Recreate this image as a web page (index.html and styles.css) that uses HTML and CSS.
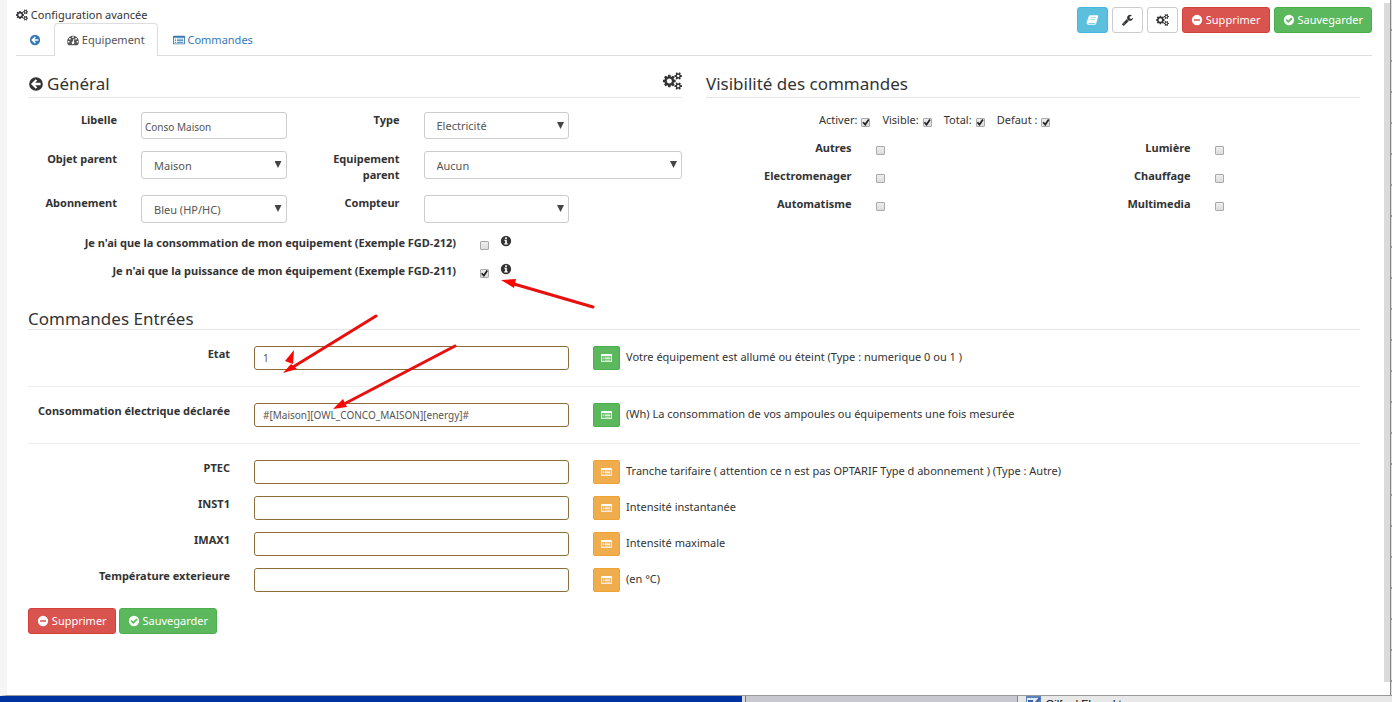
FILE: index.html
```html
<!DOCTYPE html>
<html lang="fr">
<head>
<meta charset="utf-8">
<title>Configuration avancée</title>
<link rel="stylesheet" href="styles.css">
</head>
<body>
<svg class="sprite" aria-hidden="true">
  <symbol id="cogs" viewBox="0 0 1920 1792"><path d="M896 896q0-106-75-181t-181-75-181 75-75 181 75 181 181 75 181-75 75-181zm768 512q0-52-38-90t-90-38-90 38-38 90q0 53 37.500 90.500t90.500 37.500 90.500-37.500 37.500-90.500zm0-1024q0-52-38-90t-90-38-90 38-38 90q0 53 37.500 90.500t90.500 37.500 90.500-37.500 37.500-90.500zm-384 421v185q0 10-7 19.500t-16 10.500l-155 24q-11 35-32 76 34 48 90 115 7 11 7 20 0 12-7 19-23 30-82.500 89.500t-78.500 59.500q-11 0-21-7l-115-90q-37 19-77 31-11 108-23 155-7 24-30 24h-186q-11 0-20-7.500t-10-17.500l-23-153q-34-10-75-31l-118 89q-7 7-20 7-11 0-21-8-144-133-144-160 0-9 7-19 10-14 41-53t47-61q-23-44-35-82l-152-24q-10-1-17-9.500t-7-19.500v-185q0-10 7-19.500t16-10.500l155-24q11-35 32-76-34-48-90-115-7-11-7-20 0-12 7-20 22-30 82-89t79-59q11 0 21 7l115 90q34-18 77-32 11-108 23-154 7-24 30-24h186q11 0 20 7.500t10 17.500l23 153q34 10 75 31l118-89q8-7 20-7 11 0 21 8 144 133 144 160 0 8-7 19-12 16-42 54t-45 60q23 48 34 82l152 23q10 2 17 10.500t7 19.500zm640 533v140q0 16-149 31-12 27-30 52 51 113 51 138 0 4-4 7-122 71-124 71-8 0-46-47t-52-68q-20 2-30 2t-30-2q-14 21-52 68t-46 47q-2 0-124-71-4-3-4-7 0-25 51-138-18-25-30-52-149-15-149-31v-140q0-16 149-31 13-29 30-52-51-113-51-138 0-4 4-7 4-2 35-20t59-34 30-16q8 0 46 46.500t52 67.500q20-2 30-2t30 2q51-71 92-112l6-2q4 0 124 70 4 3 4 7 0 25-51 138 17 23 30 52 149 15 149 31zm0-1024v140q0 16-149 31-12 27-30 52 51 113 51 138 0 4-4 7-122 71-124 71-8 0-46-47t-52-68q-20 2-30 2t-30-2q-14 21-52 68t-46 47q-2 0-124-71-4-3-4-7 0-25 51-138-18-25-30-52-149-15-149-31v-140q0-16 149-31 13-29 30-52-51-113-51-138 0-4 4-7 4-2 35-20t59-34 30-16q8 0 46 46.500t52 67.500q20-2 30-2t30 2q51-71 92-112l6-2q4 0 124 70 4 3 4 7 0 25-51 138 17 23 30 52 149 15 149 31z"/></symbol>
  <symbol id="wrench" viewBox="0 0 1792 1792"><path d="M448 1472q0-26-19-45t-45-19-45 19-19 45 19 45 45 19 45-19 19-45zm644-420l-682 682q-37 37-90 37-52 0-91-37l-106-108q-38-36-38-90 0-53 38-91l681-681q39 98 114.500 173.500t173.500 114.500zm634-435q0 39-23 106-47 134-164.500 217.500t-258.500 83.500q-185 0-316.500-131.500t-131.500-316.500 131.500-316.500 316.500-131.500q58 0 121.500 16.500t107.500 46.500q16 11 16 28t-16 28l-293 169v224l193 107q5-3 79-48.500t135.500-81 70.500-35.500q15 0 23.500 10t8.500 25z"/></symbol>
  <symbol id="minus" viewBox="0 0 14 14"><path fill-rule="evenodd" d="M7 1a6 6 0 1 1 0 12a6 6 0 0 1 0-12zM3.500 6v2h7v-2z"/></symbol>
  <symbol id="check" viewBox="0 0 14 14"><path fill-rule="evenodd" d="M7 1a6 6 0 1 1 0 12a6 6 0 0 1 0-12zM2.900 7l3.300 3.400l5-5l-1.400-1.400l-3.600 3.600l-1.900-1.900z"/></symbol>
  <symbol id="back" viewBox="0 0 14 14"><path fill-rule="evenodd" d="M7 1a6 6 0 1 1 0 12a6 6 0 0 1 0-12zM2.600 7l4.200 4.200l1.300-1.300l-1.900-1.900h4.800v-2h-4.800l1.900-1.900l-1.300-1.300z"/></symbol>
  <symbol id="info" viewBox="0 0 14 14"><path fill-rule="evenodd" d="M7 1a6 6 0 1 1 0 12a6 6 0 0 1 0-12zM6 2.600v2h2v-2zM5 5.600v1.200h1v2.700h-1v1.500h4v-1.500h-1v-3.900z"/></symbol>
  <symbol id="list" viewBox="0 0 14 12"><path fill-rule="evenodd" d="M1 1h12q1 0 1 1v8q0 1-1 1h-12q-1 0-1-1v-8q0-1 1-1zM1 3.500v6.500h12v-6.500zM2 4.500h1.500v1h-1.500zM4.500 4.500h7.500v1h-7.500zM2 6.300h1.500v1h-1.500zM4.500 6.300h7.500v1h-7.500zM2 8.100h1.500v1h-1.500zM4.500 8.100h7.500v1h-7.500z"/></symbol>
  <symbol id="gauge" viewBox="0 0 14 12"><path fill-rule="evenodd" d="M7 1a7 7 0 0 1 5.900 10.500q-.2.500-.8.500h-10.200q-.5 0-.8-.5a7 7 0 0 1 5.900-10.500zM1 7.200v1.600h1.800v-1.600zM2.500 3.700v1.700h1.800v-1.700zM6.100 2v1.800h1.800v-1.800zM9.700 3.700v1.700h1.800v-1.700zM11.200 7.200v1.600h1.800v-1.600zM7.600 4.500l-.9 3.300a1.500 1.500 0 1 0 1.300.3l.7-3.200z"/></symbol>
  <symbol id="book" viewBox="0 0 14 14"><path fill-rule="evenodd" d="M4.500 1.500h8.500q1 .4.700 1.500l-2.500 8.500q-.3 1-1.300 1h-7.700q-1.700-.2-2-1.800v-1l2.500-7q.6-1.200 1.800-1.200zM5.300 4l-.2.800h5.500l.3-.8zM4.700 6l-.2.800h5.500l.3-.8zM2 10.400q0 .9 1 1h6.700l.3-1z"/></symbol>
  <symbol id="notepad" viewBox="0 0 16 12"><path fill="#5d82bd" d="M1 0h15v12h-15z"/><path fill="#dfeafa" d="M2 2h11v10h-11z"/><path stroke="#3d62a8" stroke-width="2" d="M15 2l-8 9M3 5h5M3 8h3"/></symbol>
</svg>

<div class="screen">
  <main class="page">
    <header class="top">
      <div class="title"><svg class="icon"><use href="#cogs"/></svg> Configuration avancée</div>
      <div class="actions">
        <button class="btn info" type="button" aria-label="Documentation"><svg class="icon wide"><use href="#book"/></svg></button>
        <button class="btn plain" type="button" aria-label="Outils"><svg class="icon wide"><use href="#wrench"/></svg></button>
        <button class="btn plain" type="button" aria-label="Configuration"><svg class="icon wide"><use href="#cogs"/></svg></button>
        <button class="btn danger" type="button"><svg class="icon"><use href="#minus"/></svg> Supprimer</button>
        <button class="btn success" type="button"><svg class="icon"><use href="#check"/></svg> Sauvegarder</button>
      </div>
    </header>
    <nav class="tabs">
      <a class="tab" href="#retour" aria-label="Retour"><svg class="icon"><use href="#back"/></svg></a>
      <a class="tab active" href="#equipement"><svg class="icon"><use href="#gauge"/></svg> Equipement</a>
      <a class="tab" href="#commandes"><svg class="icon"><use href="#list"/></svg> Commandes</a>
    </nav>

    <form class="panel">
      <div class="columns">
        <section>
          <h3 class="heading"><svg class="icon large"><use href="#back"/></svg> Général <svg class="icon gear"><use href="#cogs"/></svg></h3>
          <div class="row fields first">
            <label class="label c2" for="libelle">Libelle</label>
            <input class="field name c3" id="libelle" type="text" value="Conso Maison">
            <label class="label c2" for="type">Type</label>
            <div class="select c3"><select class="field" id="type"><option>Electricité</option></select></div>
          </div>
          <div class="row fields">
            <label class="label c2" for="objet">Objet parent</label>
            <div class="select c3"><select class="field" id="objet"><option>Maison</option></select></div>
            <label class="label c2" for="parent">Equipement parent</label>
            <div class="select c5"><select class="field" id="parent"><option>Aucun</option></select></div>
          </div>
          <div class="row fields">
            <label class="label c2" for="abo">Abonnement</label>
            <div class="select c3"><select class="field" id="abo"><option>Bleu (HP/HC)</option></select></div>
            <label class="label c2" for="compteur">Compteur</label>
            <div class="select c3"><select class="field" id="compteur"><option></option></select></div>
          </div>
          <div class="row tick">
            <label class="label c8" for="conso">Je n'ai que la consommation de mon equipement (Exemple FGD-212)</label>
            <div class="c4 hint"><input class="box" id="conso" type="checkbox"><svg class="icon"><use href="#info"/></svg></div>
          </div>
          <div class="row tick">
            <label class="label c8" for="puissance">Je n'ai que la puissance de mon équipement (Exemple FGD-211)</label>
            <div class="c4 hint"><input class="box" id="puissance" type="checkbox" checked><svg class="icon"><use href="#info"/></svg></div>
          </div>
        </section>

        <section>
          <h3 class="heading">Visibilité des commandes</h3>
          <div class="row">
            <div class="flags">
              <label class="flag">Activer: <input class="box" type="checkbox" checked></label>
              <label class="flag">Visible: <input class="box" type="checkbox" checked></label>
              <label class="flag">Total: <input class="box" type="checkbox" checked></label>
              <label class="flag">Defaut : <input class="box" type="checkbox" checked></label>
            </div>
          </div>
          <div class="row tick">
            <label class="label c3" for="autres">Autres</label><div class="c3 hint"><input class="box" id="autres" type="checkbox"></div>
            <label class="label c3" for="lumiere">Lumière</label><div class="c3 hint"><input class="box" id="lumiere" type="checkbox"></div>
          </div>
          <div class="row tick">
            <label class="label c3" for="electro">Electromenager</label><div class="c3 hint"><input class="box" id="electro" type="checkbox"></div>
            <label class="label c3" for="chauffage">Chauffage</label><div class="c3 hint"><input class="box" id="chauffage" type="checkbox"></div>
          </div>
          <div class="row tick">
            <label class="label c3" for="auto">Automatisme</label><div class="c3 hint"><input class="box" id="auto" type="checkbox"></div>
            <label class="label c3" for="multi">Multimedia</label><div class="c3 hint"><input class="box" id="multi" type="checkbox"></div>
          </div>
        </section>
      </div>

      <section class="inputs">
        <h3 class="heading compact">Commandes Entrées</h3>
        <div class="row command">
          <label class="label c2" for="etat">Etat</label>
          <input class="field source c3" id="etat" type="text" value="1">
          <div class="c7 note"><button class="pick success" type="button" aria-label="Choisir"><svg class="icon"><use href="#list"/></svg></button>Votre équipement est allumé ou éteint (Type : numerique 0 ou 1 )</div>
        </div>
        <hr class="rule">
        <div class="row command">
          <label class="label c2" for="elec">Consommation électrique déclarée</label>
          <input class="field source c3" id="elec" type="text" value="#[Maison][OWL_CONCO_MAISON][energy]#">
          <div class="c7 note"><button class="pick success" type="button" aria-label="Choisir"><svg class="icon"><use href="#list"/></svg></button>(Wh) La consommation de vos ampoules ou équipements une fois mesurée</div>
        </div>
        <hr class="rule">
        <div class="row command">
          <label class="label c2" for="ptec">PTEC</label>
          <input class="field source c3" id="ptec" type="text">
          <div class="c7 note"><button class="pick warning" type="button" aria-label="Choisir"><svg class="icon"><use href="#list"/></svg></button>Tranche tarifaire ( attention ce n est pas OPTARIF Type d abonnement ) (Type : Autre)</div>
        </div>
        <div class="row command">
          <label class="label c2" for="inst">INST1</label>
          <input class="field source c3" id="inst" type="text">
          <div class="c7 note"><button class="pick warning" type="button" aria-label="Choisir"><svg class="icon"><use href="#list"/></svg></button>Intensité instantanée</div>
        </div>
        <div class="row command">
          <label class="label c2" for="imax">IMAX1</label>
          <input class="field source c3" id="imax" type="text">
          <div class="c7 note"><button class="pick warning" type="button" aria-label="Choisir"><svg class="icon"><use href="#list"/></svg></button>Intensité maximale</div>
        </div>
        <div class="row command">
          <label class="label c2" for="temp">Température exterieure</label>
          <input class="field source c3" id="temp" type="text">
          <div class="c7 note"><button class="pick warning" type="button" aria-label="Choisir"><svg class="icon"><use href="#list"/></svg></button>(en °C)</div>
        </div>
      </section>

      <div class="bottom">
        <button class="btn danger" type="button"><svg class="icon"><use href="#minus"/></svg> Supprimer</button>
        <button class="btn success" type="button"><svg class="icon"><use href="#check"/></svg> Sauvegarder</button>
      </div>
    </form>
  </main>
  <div class="scrollbar"></div>
  <div class="edge"></div>
</div>

<footer class="desktop">
  <div class="blue"></div>
  <div class="grey"></div>
  <div class="contact"><svg class="pad"><use href="#notepad"/></svg>Gilfred Elound t</div>
</footer>

<svg class="arrows" width="620" height="430" aria-hidden="true">
  <g stroke="#e8100c" stroke-width="3" stroke-linecap="round"><path d="M593 307L514 284M376 316L293 367M455 346L346 403"/></g>
  <g fill="#fb0500"><path d="M501 280l15-1l-2 9z"/><path d="M283 373l8-9l6 5zM285 361l9-11l-1 14z"/><path d="M333 409l10-10l4 8z"/></g>
</svg>
</body>
</html>
```

FILE: styles.css
```css
* { box-sizing: border-box; }
body {
  margin: 0;
  min-height: 100vh;
  display: flex;
  flex-direction: column;
  position: relative;
  overflow: hidden;
  background: #fff;
  color: #333;
  font: 11px/16px "Noto Sans", sans-serif;
}
.sprite { display: none; }
.screen { flex: 1; display: flex; border-left: 7px solid #f5f5f5; border-bottom: 1px solid #999; }
.page { flex: 1; padding: 7px 12px 0 9px; }
.scrollbar { width: 6px; margin: 3px 0 13px; background: #dbdbdb; }
.edge {
  width: 2px;
  border-left: 1px solid #888;
  background: repeating-linear-gradient(#ddd 0 29px, #999 29px 31px);
}
.icon { width: 12px; height: 12px; fill: currentColor; vertical-align: -2px; }
.icon.wide { width: 13px; }
.icon.large { width: 16px; height: 16px; }

.top { display: flex; justify-content: space-between; height: 16px; }
.actions { display: flex; gap: 4px; height: 26px; }
.btn {
  height: 26px;
  padding: 0 8px;
  border: 1px solid;
  border-radius: 3px;
  color: #fff;
  font: 11px/24px "Noto Sans", sans-serif;
  white-space: nowrap;
}
.info { background: #5bc0de; border-color: #46b8da; }
.plain { background: #fff; border-color: #ccc; color: #333; }
.danger { background: #d9534f; border-color: #d43f3a; }
.success { background: #5cb85c; border-color: #4cae4c; }
.warning { background: #f0ad4e; border-color: #eea236; }

.tabs { display: flex; border-bottom: 1px solid #ddd; }
.tab {
  padding: 8px 12px;
  border: 1px solid transparent;
  border-bottom: 0;
  border-radius: 4px 4px 0 0;
  margin-bottom: -1px;
  color: #337ab7;
  text-decoration: none;
}
.tab.active { border-color: #ddd; background: #fff; color: #555; margin-right: 2px; }

.panel { padding: 16px 12px 0; }
.columns { display: grid; grid-template-columns: 1fr 1fr; gap: 24px; }
.heading {
  display: flex;
  align-items: center;
  gap: 3px;
  height: 26px;
  margin: 0 0 14px;
  padding-bottom: 2px;
  border-bottom: 1px solid #e5e5e5;
  font-size: 17px;
  font-weight: 400;
}
.heading.compact { height: 22px; margin-bottom: 16px; padding-bottom: 0; }
.gear { width: 19px; height: 18px; margin: 0 0 6px auto; }
.row { display: grid; grid-template-columns: repeat(12, minmax(0, 1fr)); column-gap: 24px; }
.fields { margin-bottom: 12px; }
.c2 { grid-column: span 2; }
.c3 { grid-column: span 3; }
.c4 { grid-column: span 4; }
.c5 { grid-column: span 5; }
.c7 { grid-column: span 7; }
.c8 { grid-column: span 8; }
.label { font-weight: 700; text-align: right; justify-self: end; }
.c8.label, .command .label { white-space: nowrap; }
.field {
  width: 100%;
  height: 28px;
  border: 1px solid #ccc;
  border-radius: 3px;
  background: #fff;
  color: #555;
  font: 11px "Noto Sans", sans-serif;
}
.first .field { height: 27px; }
.name { padding: 2px 3px 0; font-size: 10px; }
.select { position: relative; }
.select .field { appearance: none; padding: 0 12px; display: block; }
.select::after {
  content: "";
  position: absolute;
  top: 10px;
  right: 5px;
  width: 7px;
  height: 7px;
  background: #444;
  clip-path: polygon(0 0, 100% 0, 50% 100%);
}
.tick { height: 28px; }
.hint { display: flex; gap: 11px; }
.box {
  appearance: none;
  width: 9px;
  height: 9px;
  margin: 6px 0 0;
  border: 1px solid #aaa;
  border-radius: 1px;
  background: linear-gradient(#eee, #ddd);
}
.box:checked::before {
  content: "";
  display: block;
  width: 7px;
  height: 7px;
  background: #222;
  clip-path: polygon(0 55%, 20% 40%, 38% 62%, 80% 0, 100% 15%, 42% 100%);
}
.flags { grid-column: 3 / -1; display: flex; gap: 12px; height: 28px; }
.flag { display: flex; gap: 4px; }

.inputs { margin-top: 17px; }
.command { height: 24px; margin-bottom: 12px; }
.source { height: 24px; padding: 0 8px; border-color: #8a6d3b; font-size: 10px; }
.note { display: flex; gap: 6px; line-height: 22px; white-space: nowrap; }
.pick { width: 27px; height: 24px; padding: 0; border: 1px solid; border-radius: 2px; color: #fff; line-height: 20px; }
.pick .icon { width: 11px; }
.success.pick { border-color: #4cae4c; }
.warning.pick { border-color: #eea236; }
.rule { margin: 16px 0; border: 0; border-top: 1px solid #eee; }
.command:has(+ .rule) { margin-bottom: 0; }
.bottom { display: flex; gap: 3px; padding-top: 4px; }

.desktop { display: flex; height: 6px; overflow: hidden; background: #ddd; }
.blue { flex: 0 0 53.3%; background: #0033a0; }
.grey { flex: 0 0 19.6%; margin-left: 3px; background: #c8c8d0; border-left: 1px solid #777; border-right: 1px solid #888; }
.contact { flex: 1; padding-left: 7px; background: #e8e8e8; color: #000; font: 11px/16px "Liberation Sans", sans-serif; white-space: nowrap; }
.pad { width: 16px; height: 12px; margin-right: 5px; vertical-align: top; }
.arrows { position: absolute; top: 0; left: 0; pointer-events: none; }
```
